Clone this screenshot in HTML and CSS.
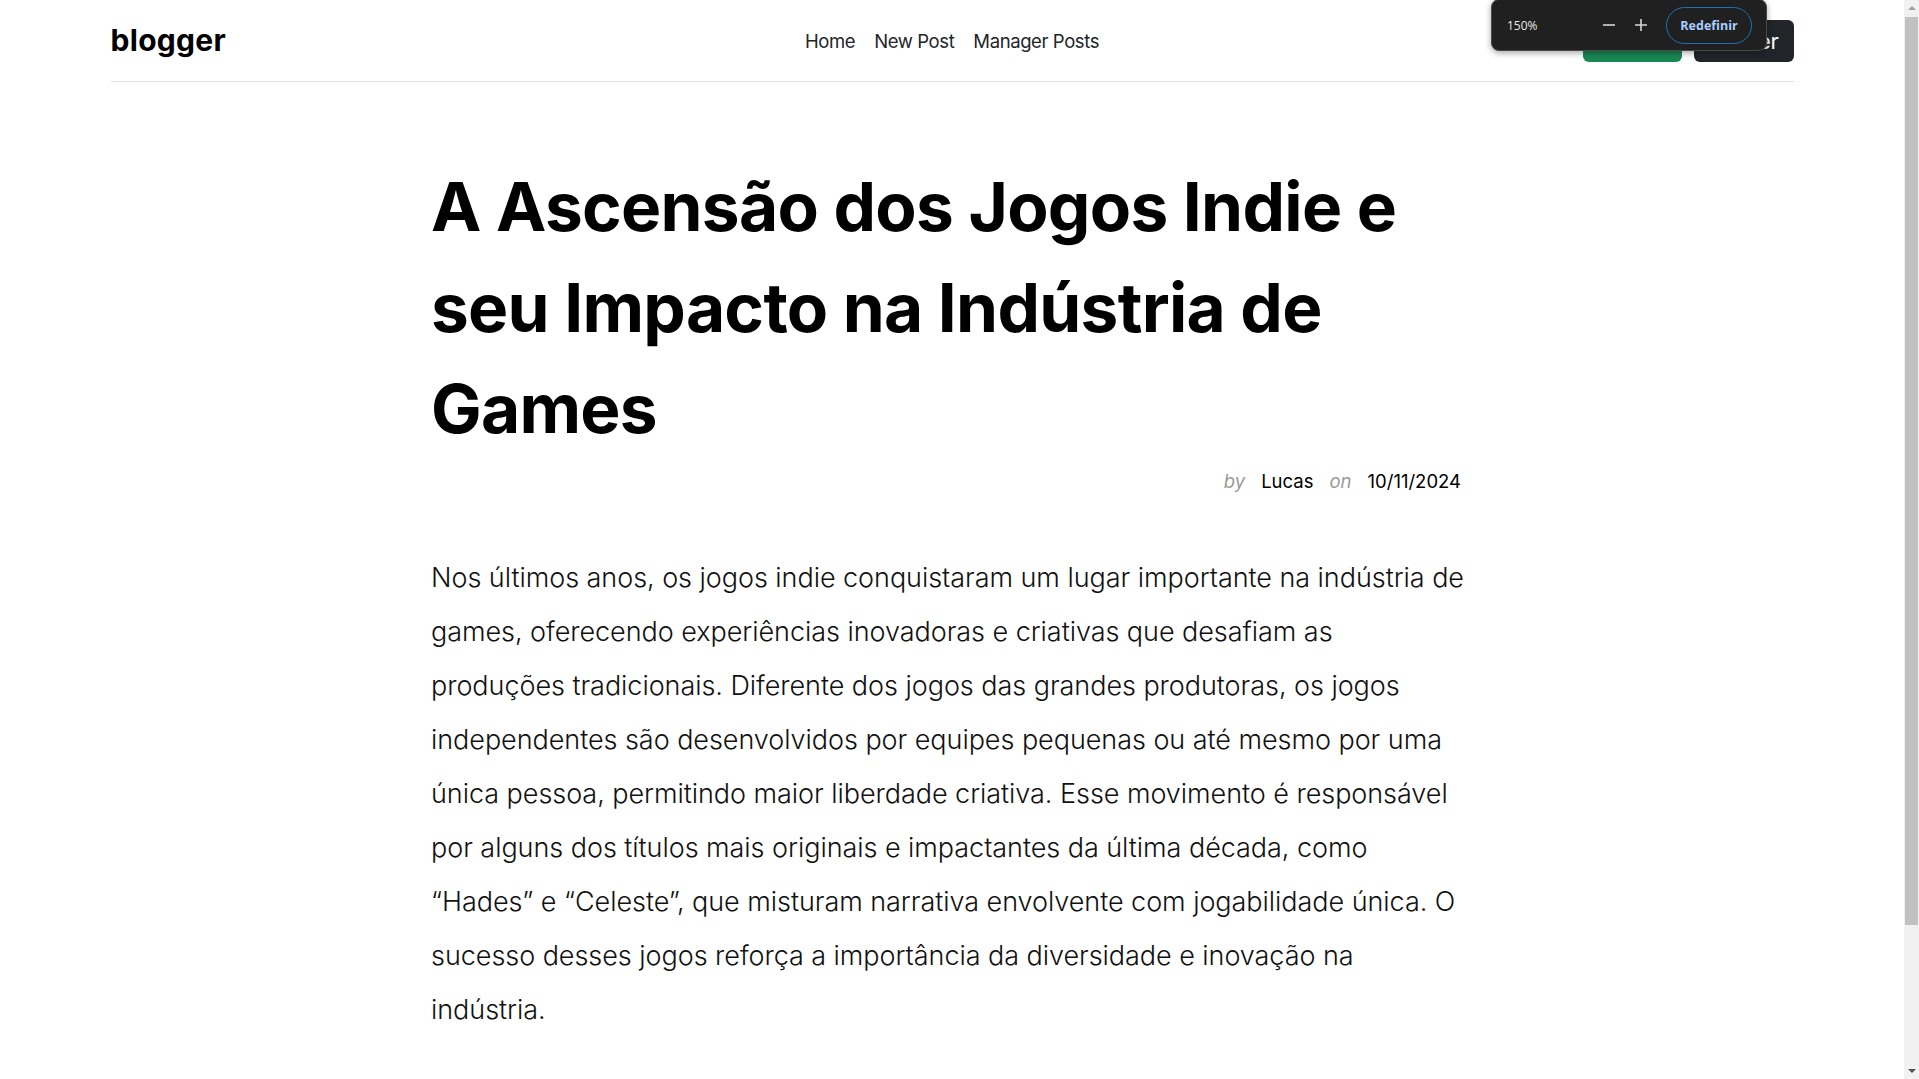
FILE: index.html
```html
<!DOCTYPE html>
<html lang="pt-BR">
<head>
<meta charset="utf-8">
<title>blogger</title>
<link rel="stylesheet" href="styles.css">
</head>
<body>
<div class="page">
  <header class="container navbar">
    <a class="brand" href="#">blogger</a>
    <nav class="nav">
      <a href="#">Home</a>
      <a href="#">New Post</a>
      <a href="#">Manager Posts</a>
    </nav>
    <div class="actions">
      <a class="btn btn-green" href="#">Create</a>
      <a class="btn btn-dark" href="#">Enter</a>
    </div>
  </header>

  <main class="article">
    <h1 class="title">A Ascensão dos Jogos Indie e seu Impacto na Indústria de Games</h1>
    <div class="byline">
      <span class="muted">by</span>
      <span>Lucas</span>
      <span class="muted">on</span>
      <span>10/11/2024</span>
    </div>
    <p class="content">Nos últimos anos, os jogos indie conquistaram um lugar importante na indústria de<br>
games, oferecendo experiências inovadoras e criativas que desafiam as<br>
produções tradicionais. Diferente dos jogos das grandes produtoras, os jogos<br>
independentes são desenvolvidos por equipes pequenas ou até mesmo por uma<br>
única pessoa, permitindo maior liberdade criativa. Esse movimento é responsável<br>
por alguns dos títulos mais originais e impactantes da última década, como<br>
“Hades” e “Celeste”, que misturam narrativa envolvente com jogabilidade única. O<br>
sucesso desses jogos reforça a importância da diversidade e inovação na<br>
indústria.</p>
  </main>

  <div class="zoom-popup">
    <span class="zoom-value">150%</span>
    <span class="zoom-ctrl">
      <svg width="14" height="14" viewBox="0 0 14 14"><path d="M1 7h12" stroke="#d6d6d6" stroke-width="1.6"/></svg>
    </span>
    <span class="zoom-ctrl">
      <svg width="14" height="14" viewBox="0 0 14 14"><path d="M1 7h12M7 1v12" stroke="#d6d6d6" stroke-width="1.6"/></svg>
    </span>
    <span class="zoom-reset">Redefinir</span>
  </div>
</div>
<div class="scrollbar">
  <span class="arrow up"></span>
  <span class="thumb"></span>
  <span class="arrow down"></span>
</div>
</body>
</html>
```

FILE: styles.css
```css
* { box-sizing: border-box; }
html, body { margin: 0; height: 100%; }
body {
  display: flex;
  overflow: hidden;
  background: #fff;
  font-family: Inter, "Open Sans", sans-serif;
  color: #000;
}
.page { flex: 1; position: relative; overflow: hidden; }

.container { width: 1683px; margin: 0 auto; }
.navbar {
  height: 82px;
  border-bottom: 1px solid #dee2e6;
  display: grid;
  grid-template-columns: 1fr auto 1fr;
  align-items: center;
}
.brand {
  font-size: 30px;
  font-weight: 700;
  color: #000;
  text-decoration: none;
  letter-spacing: 0.3px;
  padding-bottom: 2px;
}
.nav { display: flex; gap: 19px; }
.nav a {
  font-size: 18.5px;
  color: #212529;
  text-decoration: none;
  letter-spacing: -0.4px;
}
.actions { display: flex; justify-content: flex-end; gap: 12px; }
.btn {
  display: inline-flex;
  align-items: center;
  justify-content: center;
  height: 42px;
  width: 100px;
  border-radius: 6px;
  color: #fff;
  font-size: 22px;
  letter-spacing: -0.3px;
  text-decoration: none;
}
.btn-green { background: #198754; width: 99px; }
.btn-dark { background: #212529; justify-content: flex-end; padding-right: 15px; }

.article { width: 1042px; margin: 0 auto; padding-top: 74px; }
.title {
  margin: 0;
  font-size: 67.5px;
  line-height: 101px;
  font-weight: 700;
  letter-spacing: -0.7px;
}
.byline {
  margin-top: 9px;
  display: flex;
  justify-content: flex-end;
  gap: 16px;
  padding-right: 12px;
  font-size: 18.5px;
  line-height: 27px;
}
.muted { color: #999; font-style: italic; }
.content {
  margin: 56px -40px 0 0;
  font-size: 27px;
  line-height: 54px;
  font-weight: 300;
  letter-spacing: -0.05px;
  color: #111;
}

.zoom-popup {
  position: absolute;
  top: -1px;
  left: 1491px;
  width: 276px;
  height: 52px;
  background: #202020;
  border: 1px solid #4a4a4a;
  border-radius: 8px;
  box-shadow: 0 2px 6px rgba(0,0,0,.35);
  display: flex;
  align-items: center;
  padding: 0 14px 0 15px;
  font-family: "Open Sans", sans-serif;
}
.zoom-value { color: #e8e8e8; font-size: 12px; width: 86px; }
.zoom-ctrl { width: 32px; display: flex; justify-content: center; }
.zoom-reset {
  margin-left: auto;
  width: 86px;
  height: 37px;
  border: 1px solid #1a73b8;
  border-radius: 19px;
  display: flex;
  align-items: center;
  justify-content: center;
  color: #a8cfff;
  font-size: 12.5px;
  font-weight: 700;
}

.scrollbar {
  width: 15px;
  flex: none;
  background: #f1f1f1;
  display: flex;
  flex-direction: column;
  align-items: center;
}
.arrow { width: 0; height: 0; border-left: 4px solid transparent; border-right: 4px solid transparent; }
.arrow.up { border-bottom: 4px solid #a3a3a3; margin-top: 6px; }
.arrow.down { border-top: 4px solid #505050; margin-top: auto; margin-bottom: 6px; }
.thumb { width: 13px; height: 908px; background: #c1c1c1; margin-top: 7px; }
```
